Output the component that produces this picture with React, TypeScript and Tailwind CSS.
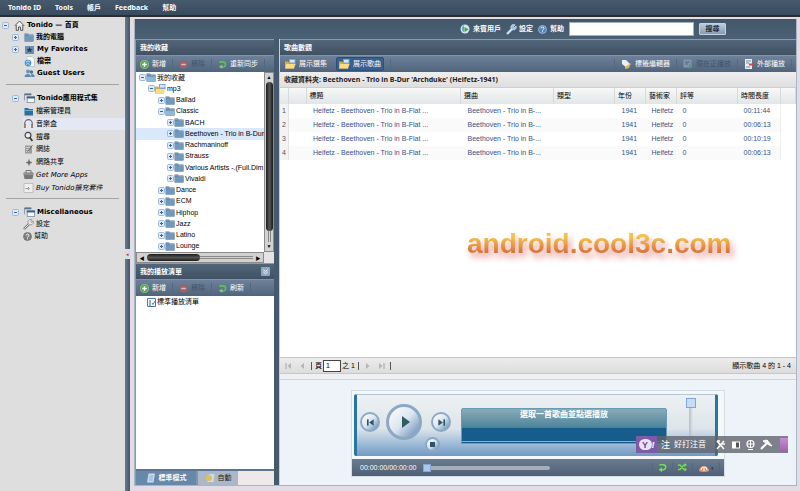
import React from "react";

type NodeProps = { label: string; depth: number; open?: boolean; selected?: boolean; kind?: "folder" | "library" };

const tree: NodeProps[] = [
  { label: "我的收藏", depth: 0, open: true },
  { label: "mp3", depth: 1, open: true, kind: "library" },
  { label: "Ballad", depth: 2 },
  { label: "Classic", depth: 2, open: true },
  { label: "BACH", depth: 3 },
  { label: "Beethoven - Trio in B-Dur", depth: 3, selected: true },
  { label: "Rachmaninoff", depth: 3 },
  { label: "Strauss", depth: 3 },
  { label: "Various Artists -.(Full.Dim", depth: 3 },
  { label: "Vivaldi", depth: 3 },
  { label: "Dance", depth: 2 },
  { label: "ECM", depth: 2 },
  { label: "Hiphop", depth: 2 },
  { label: "Jazz", depth: 2 },
  { label: "Latino", depth: 2 },
  { label: "Lounge", depth: 2 },
];

const indents = ["pl-[3px]", "pl-[12px]", "pl-[22px]", "pl-[31px]"];

const songs = ["00:11:44", "00:06:13", "00:10:19", "00:06:13"];

function Expander({ open }: { open?: boolean }) {
  return (
    <svg viewBox="0 0 7 7" className="h-[7px] w-[7px] shrink-0">
      <rect x=".5" y=".5" width="6" height="6" rx="1" fill="#dfeaf6" stroke="#9db9d5" />
      <path d={open ? "M2 3.5h3" : "M2 3.5h3M3.5 2v3"} stroke="#3c6497" />
    </svg>
  );
}

function Folder({ open }: { open?: boolean }) {
  return (
    <svg viewBox="0 0 10 9" className="h-[9px] w-[10px] shrink-0">
      <path d="M.5.5h3.500l1 1H9.500v7h-9z" fill="#56799a" />
      <path d="M1 2.500h8.500V8.500H1z" fill="#7199bd" />
      {open && <path d="M0 4h10L9 8.500H1z" fill="#8fb8d8" />}
      <path d="M1 1.200h2.800l1 1h4.500" stroke="#9dbbd4" strokeWidth=".7" fill="none" />
    </svg>
  );
}

function YellowFolder() {
  return (
    <svg viewBox="0 0 11 10" className="h-[10px] w-[11px] shrink-0">
      <path d="M0 2.500h3l1 1H9v6H0z" fill="#e2ab33" />
      <rect x="4" y="0" width="6.500" height="6" fill="#7ea6cc" />
      <rect x="5" y="1" width="4.500" height="2.500" fill="#d8eaf7" />
      <path d="M1 5h9.500L9 9.500H.4z" fill="#f9dc85" />
    </svg>
  );
}

function AddIcon() {
  return (
    <svg viewBox="0 0 10 10" className="h-[9px] w-[9px] shrink-0">
      <circle cx="5" cy="5" r="4.500" fill="#55ab47" stroke="#a4d79a" strokeWidth=".7" />
      <path d="M5 2.400v5.200M2.400 5h5.200" stroke="#fff" strokeWidth="1.500" />
    </svg>
  );
}
function RemoveIcon() {
  return (
    <svg viewBox="0 0 10 10" className="h-[9px] w-[9px] shrink-0">
      <circle cx="5" cy="5" r="4.400" fill="#a3606b" />
      <path d="M2.400 5h5.200" stroke="#d9bcc4" strokeWidth="1.600" />
    </svg>
  );
}
function RefreshIcon() {
  return (
    <svg viewBox="0 0 10 10" className="h-[9px] w-[9px] shrink-0">
      <path d="M1.500 2.200h4.200a2.700 2.700 0 0 1 0 5.400H4" stroke="#5cb95e" strokeWidth="2" fill="none" />
      <path d="M4.800 5v5L1 7.600z" fill="#7ad07a" />
    </svg>
  );
}
function WrenchIcon({ light }: { light?: boolean }) {
  return (
    <svg viewBox="0 0 12 12" className="h-[11px] w-[11px] shrink-0">
      <path d="M1.800 10.200 7 5" stroke={light ? "#b9d4f1" : "#777"} strokeWidth="2.600" strokeLinecap="round" />
      <path d="M1.800 10.200 7 5" stroke={light ? "#dcebfb" : "#f1f1f1"} strokeWidth="1" strokeLinecap="round" />
      <path d="M10 1 8.300 2.800l1 1L11 2.200A3 3 0 1 1 10 1z" fill={light ? "#9dbfe6" : "#e6e6e6"} stroke={light ? "#dcebfb" : "#777"} strokeWidth=".7" />
    </svg>
  );
}
function HelpIcon({ light }: { light?: boolean }) {
  return (
    <svg viewBox="0 0 10 10" className="h-[9px] w-[9px] shrink-0">
      <circle cx="5" cy="5" r="4.400" fill={light ? "#4f81bd" : "#808080"} stroke={light ? "#b7d0ee" : "#666"} strokeWidth=".8" />
      <path d="M3.400 3.800c0-2 3.200-2 3.200 0C6.600 5 5 5 5 6.200M5 7v1" stroke="#fff" strokeWidth="1.100" fill="none" />
    </svg>
  );
}

const box = "h-[11px] w-[11px] shrink-0";

function HouseIcon() {
  return (
    <svg viewBox="0 0 11 11" className={box}>
      <path d="M.8 5.800 5.500 1l4.700 4.800M2.200 5v5.300h2.200V7h2.200v3.300h2.200V5" fill="#f4f4f4" stroke="#555" strokeWidth="1" />
    </svg>
  );
}
function StarFolderIcon() {
  return (
    <svg viewBox="0 0 11 11" className={box}>
      <path d="M1 2h9v8H1z" fill="#6c8eb0" />
      <path d="m5.500 3 1 2h2L7 6.400l.6 2.200-2.100-1.300-2.100 1.300L4 6.400 2.500 5h2z" fill="#273f58" />
    </svg>
  );
}
function DocIcon() {
  return (
    <svg viewBox="0 0 11 11" className={box}>
      <path d="M3 .5h5l2.500 2.500v7.500H3z" fill="#f6f9fc" stroke="#a9bccd" strokeWidth=".7" />
      <circle cx="4" cy="7" r="3.300" fill="#4f95c8" />
      <path d="M2 6q2-2 4 0M2 8.500q2-2 3.600 0" stroke="#d8ecf8" strokeWidth=".8" fill="none" />
    </svg>
  );
}
function UsersIcon() {
  return (
    <svg viewBox="0 0 11 11" className={box}>
      <circle cx="4" cy="3.500" r="2" fill="#6c93b8" />
      <circle cx="7.500" cy="4" r="1.700" fill="#4e7396" />
      <path d="M.5 9c0-4 6.500-4 6.500 0zM7.300 9h3.400c0-2.600-1.600-3.300-3.600-3z" fill="#5f88b0" />
    </svg>
  );
}
function WindowsIcon() {
  return (
    <svg viewBox="0 0 12 11" className="h-[10px] w-[11px] shrink-0">
      <path d="M.5 8V1.500H8" stroke="#8b98a5" fill="none" />
      <path d="M.5 1.500H8" stroke="#59718a" strokeWidth="2" />
      <rect x="3.500" y="4" width="8" height="6.500" fill="#f4f7fa" stroke="#8b98a5" />
      <path d="M3 5h9" stroke="#35608c" strokeWidth="2" />
    </svg>
  );
}
function PlainFolderIcon() {
  return (
    <svg viewBox="0 0 11 11" className={box}>
      <path d="M1.500 2h3.500l1 1h4v6.500H1.500z" fill="#2b6f9b" />
      <path d="M1.500 4h8.500v1H1.500z" fill="#6db0d3" />
    </svg>
  );
}
function HeadphonesIcon() {
  return (
    <svg viewBox="0 0 11 11" className={box}>
      <path d="M1.700 8V5.500a3.800 3.800 0 0 1 7.600 0V8" stroke="#666" strokeWidth="1.200" fill="none" />
      <path d="M1.900 6v4M9.100 6v4" stroke="#9b7f70" strokeWidth="2" />
    </svg>
  );
}
function MagnifierIcon() {
  return (
    <svg viewBox="0 0 11 11" className={box}>
      <circle cx="5" cy="4.200" r="2.900" fill="#eee" stroke="#444" strokeWidth="1.200" />
      <path d="m6.800 6.600 2.600 3.400" stroke="#333" strokeWidth="1.700" />
    </svg>
  );
}
function NoteIcon() {
  return (
    <svg viewBox="0 0 11 11" className={box}>
      <path d="M2 1.500h7v8H2z" fill="#9b9b9b" />
      <path d="M3 3.500h4M3 5.500h3M3 7.500h3" stroke="#ddd" strokeWidth=".8" />
      <path d="m4.500 7.500 5-6" stroke="#666" />
    </svg>
  );
}
function ShareIcon() {
  return (
    <svg viewBox="0 0 11 11" className={box}>
      <path d="M6 2.500v6M3 5.500h6" stroke="#888" strokeWidth="1.600" />
      <circle cx="6" cy="5.500" r="1.500" fill="#666" />
    </svg>
  );
}
function BasketIcon() {
  return (
    <svg viewBox="0 0 11 11" className={box}>
      <path d="M3 4V1.500h5V4" stroke="#777" fill="none" />
      <path d="M.5 3.500h10v1.500l-1 5h-8l-1-5z" fill="#777" />
      <path d="M1 5h9" stroke="#bbb" strokeWidth=".8" />
    </svg>
  );
}
function CardIcon() {
  return (
    <svg viewBox="0 0 11 11" className={box}>
      <path d="M1 1.500h9v9H1z" fill="#efefef" stroke="#b0b0b0" strokeWidth=".7" />
      <path d="M2.500 6.500h3M5 5l1.500 1.500L5 8" stroke="#888" strokeWidth=".9" fill="none" />
    </svg>
  );
}

function NavRow({ icon, children, expander, level, bold = true, active, italic }: {
  icon: React.ReactNode; children: React.ReactNode; expander?: "open" | "closed"; level: 0 | 1 | 2; bold?: boolean; active?: boolean; italic?: boolean;
}) {
  const pad = level === 0 ? "pl-[2px]" : level === 1 ? "pl-[12px]" : "pl-[23px]";
  return (
    <li className={`flex min-h-[12px] flex-1 items-center ${pad}`}>
      {level < 2 && <span className="w-[12px]">{expander && <Expander open={expander === "open"} />}</span>}
      <a href="#" className={`flex h-full min-w-0 flex-1 items-center gap-[2px] whitespace-nowrap text-black ${bold ? "font-bold" : ""} ${italic ? "italic" : ""} ${active ? "bg-[#e3e8f4]" : ""}`}>
        {icon}
        {children}
      </a>
    </li>
  );
}

function ToolButton({ icon, children, disabled, pressed }: { icon: React.ReactNode; children: React.ReactNode; disabled?: boolean; pressed?: boolean }) {
  return (
    <button
      disabled={disabled}
      className={`flex h-[14px] items-center gap-[3px] whitespace-nowrap ${disabled ? "text-[#40536a]" : "text-white"} ${pressed ? "rounded-[2px] border border-[#2c4f78] bg-[#35608f] px-[2px]" : "px-[3px]"}`}
    >
      {icon}
      {children}
    </button>
  );
}

const Sep = () => <span className="h-[10px] w-px bg-[#53687f]" />;

const titleBar = "flex h-[16px] shrink-0 items-center border-t border-[#8d9cac] bg-linear-to-b from-[#536679] to-[#3f5163] px-[4px] font-bold text-white";
const toolBar = "flex h-[17px] shrink-0 items-center border-t border-[#8193a6] bg-linear-to-b from-[#6d819a] to-[#50647c]";

function EditTools({ reload }: { reload: string }) {
  return (
    <div className={`${toolBar} gap-[3px] pl-px`}>
      <ToolButton icon={<AddIcon />}>新增</ToolButton>
      <Sep />
      <ToolButton disabled icon={<RemoveIcon />}>移除</ToolButton>
      <Sep />
      <ToolButton icon={<RefreshIcon />}>{reload}</ToolButton>
      <Sep />
    </div>
  );
}

function LeftColumn() {
  return (
    <section className="flex w-[139px] shrink-0 flex-col border-l border-[#8d9cac] bg-white">
      <h2 className={titleBar}>我的收藏</h2>
      <EditTools reload="重新同步" />
      <div className="flex h-[180px] shrink-0">
        <ul className="flex min-w-0 flex-1 flex-col">
          {tree.map((n) => (
            <li key={n.label} className={`flex min-h-0 flex-1 items-center ${indents[n.depth]} ${n.selected ? "bg-[#d9e8fb]" : ""}`}>
              <Expander open={n.open} />
              <a href="#" className="flex items-center gap-px whitespace-nowrap text-black">
                {n.kind === "library" ? <YellowFolder /> : <Folder open={n.open} />}
                {n.label}
              </a>
            </li>
          ))}
        </ul>
        <div className="flex w-[10px] flex-col items-center border border-[#8a8a8a] bg-[#d2d2d2]">
          <span className="h-[9px] text-[5px] leading-[9px]">▲</span>
          <span className="h-[149px] w-[7px] rounded-full bg-linear-to-r from-[#1c1c1c] via-[#555] to-[#1c1c1c]" />
          <span className="w-[3px] flex-1 border-x border-[#888]" />
          <span className="h-[9px] text-[5px] leading-[9px]">▼</span>
        </div>
      </div>
      <div className="flex h-[11px] shrink-0 bg-[#e4e4e4] pr-[10px]">
        <div className="flex flex-1 items-center border border-[#8a8a8a] bg-[#d2d2d2]">
          <span className="w-[10px] text-center text-[5px]">◀</span>
          <span className="h-[7px] w-[53px] rounded-full bg-linear-to-b from-[#1c1c1c] via-[#555] to-[#1c1c1c]" />
          <span className="h-[3px] flex-1 border-y border-[#888]" />
          <span className="w-[10px] text-center text-[5px]">▶</span>
        </div>
      </div>
      <h2 className={`${titleBar} justify-between`}>
        我的播放清單
        <button aria-label="收合" className="flex h-[9px] w-[9px] items-center justify-center rounded-[1px] bg-[#8fa8c4]">
          <svg viewBox="0 0 8 8" className="h-[7px] w-[7px]"><path d="m1.500 2 2.500 2 2.500-2M1.500 4.500l2.500 2 2.500-2" stroke="#fff" fill="none" /></svg>
        </button>
      </h2>
      <EditTools reload="刷新" />
      <ul className="min-h-0 flex-1">
        <li className="flex h-[12px] items-center gap-px pl-[11px]">
          <svg viewBox="0 0 9 9" className="h-[9px] w-[9px]">
            <path d="M.5.5h8v8h-8z" fill="#fff" stroke="#4b77a8" />
            <path d="M2 3h2M2 5h2M2 7h2" stroke="#2e5c96" />
            <path d="m5 5 1 1.500L8 3" stroke="#4a82c4" fill="none" />
          </svg>
          <a href="#" className="text-black">標準播放清單</a>
        </li>
      </ul>
      <div className="flex h-[16px] shrink-0 border-t-2 border-[#5b7592] bg-[#eee9e9]">
        <button className="flex w-[60px] items-center justify-center gap-[3px] bg-[#6788a8] font-bold text-white">
          <svg viewBox="0 0 10 10" className="h-[10px] w-[10px]"><path d="M2.500.5h6.500l-1.500 9H1z" fill="#c6def3" /><path d="M3.500 3h4M3 5h4M2.800 7h4" stroke="#7da1c4" strokeWidth=".8" /></svg>
          標準模式
        </button>
        <button className="flex w-[42px] items-center justify-center gap-[3px] border-l-2 border-[#8196ac] bg-[#abb8c8] text-[#222]">
          <svg viewBox="0 0 10 10" className="h-[10px] w-[10px]"><path d="M4 1h5.500l-1 8H2.500z" fill="#cbdcf0" /><circle cx="4" cy="5" r="3" fill="#e5c151" /></svg>
          自動
        </button>
      </div>
    </section>
  );
}

const headers = ["", "", "標題", "選曲", "類型", "年份", "藝術家", "評等", "時間長度", ""];

function SongTable() {
  return (
    <table className="w-full table-fixed border-collapse text-left">
      <colgroup>
        <col className="w-[8px]" /><col className="w-[18px]" /><col /><col className="w-[93px]" /><col className="w-[61px]" />
        <col className="w-[31px]" /><col className="w-[31px]" /><col className="w-[61px]" /><col className="w-[43px]" /><col className="w-[15px]" />
      </colgroup>
      <thead>
        <tr className="h-[16px] bg-linear-to-b from-[#f7f8f8] to-[#e1e6e6]">
          {headers.map((h, i) => (
            <th key={i} className="whitespace-nowrap border-r border-[#d5dadb] p-0 pl-[3px] font-normal leading-[14px] text-black">{h}</th>
          ))}
        </tr>
      </thead>
      <tbody>
        {songs.map((t, i) => (
          <tr key={i} className={`h-[14px] whitespace-nowrap text-[#35538a] ${i % 2 ? "bg-[#fafafa]" : "bg-white"}`}>
            <td className="border-r border-[#e2e2e2] bg-[#f3f3f3] p-0 pl-[2px] text-[#555]">{i + 1}</td>
            <td className="p-0" />
            <td className="p-0 pl-[7px]">Heifetz - Beethoven - Trio in B-Flat ...</td>
            <td className="p-0 pl-[7px]">Beethoven - Trio in B-...</td>
            <td className="p-0" />
            <td className="p-0 pl-[7px]">1941</td>
            <td className="p-0 pl-[6px]">Heifetz</td>
            <td className="p-0 pl-[6px]">0</td>
            <td className="border-r border-[#eee] p-0 pl-[6px]">{t}</td>
            <td className="bg-white p-0" />
          </tr>
        ))}
      </tbody>
    </table>
  );
}

const roundButton = "flex items-center justify-center rounded-full border-[#8ba9c5] bg-linear-to-br from-white via-[#dbe5ef] to-[#5f89b3]";

function Player() {
  return (
    <div className="flex w-[374px] flex-col border border-[#d2dde6] bg-[#f4f8fb]">
      <div className="flex h-[68px] items-center pl-[2px] pr-[6px]">
        <div className="flex h-[62px] flex-1 rounded-[2px] border-x-[3px] border-t border-x-[#28759f] border-t-[#b4c6d4] bg-linear-to-b from-[#edf1f3] via-[#dde5ea] via-55% to-[#6f9ac5]">
          <div className="grid w-[104px] grid-cols-[24px_44px_30px] items-center pt-[8px]">
            <button aria-label="上一首" className={`${roundButton} ml-[3px] h-[20px] w-[20px] border-2`}>
              <svg viewBox="0 0 10 10" className="h-[9px] w-[9px]"><path d="M2 1.500v7" stroke="#2c5563" strokeWidth="1.800" /><path d="M8.500 1.500v7L3.500 5z" fill="#2c5563" /></svg>
            </button>
            <button aria-label="播放" className={`${roundButton} ml-[5px] h-[36px] w-[36px] border-[3px]`}>
              <svg viewBox="0 0 14 14" className="ml-[4px] h-[14px] w-[14px]"><path d="M3 1v12l8-6z" fill="#315b65" /></svg>
            </button>
            <button aria-label="下一首" className={`${roundButton} ml-[6px] h-[20px] w-[20px] border-2`}>
              <svg viewBox="0 0 10 10" className="h-[9px] w-[9px]"><path d="M8 1.500v7" stroke="#2c5563" strokeWidth="1.800" /><path d="M1.500 1.500v7L6.500 5z" fill="#2c5563" /></svg>
            </button>
            <button aria-label="停止" className={`${roundButton} col-start-3 -mt-[5px] mb-[3px] h-[15px] w-[15px] border-2`}>
              <span className="h-[5px] w-[5px] bg-[#2c5563]" />
            </button>
          </div>
          <div className="mt-[13px] flex h-[36px] flex-1 flex-col rounded-t-[2px] border border-[#6b9bb2] bg-[#175d8c] text-center text-[8px] font-bold text-white">
            <p className="h-[19px] shrink-0 bg-linear-to-b from-[#8aabb6] to-[#4a839a] leading-[11px]">選取一首歌曲並點選播放</p>
            <span className="mt-[13px] h-px bg-[#86adc8]" />
          </div>
          <div className="flex w-[48px] justify-center pt-[3px]">
            <input
              type="range" aria-label="音量" defaultValue={100}
              className="h-[38px] w-[10px] appearance-none bg-linear-to-r from-transparent from-30% via-[#b6c0c8] via-30% to-transparent to-70% [direction:rtl] [writing-mode:vertical-lr] [&::-webkit-slider-thumb]:h-[10px] [&::-webkit-slider-thumb]:w-[10px] [&::-webkit-slider-thumb]:appearance-none [&::-webkit-slider-thumb]:border [&::-webkit-slider-thumb]:border-[#7fa6d6] [&::-webkit-slider-thumb]:bg-[#c5dcf6]"
            />
          </div>
        </div>
      </div>
      <div className="flex h-[17px] items-center bg-linear-to-b from-[#6b7b8f] to-[#4f6076] pl-[8px] pr-[4px] text-white">
        <span className="w-[58px] whitespace-nowrap">00:00:00/00:00:00</span>
        <input
          type="range" aria-label="進度" defaultValue={0}
          className="ml-[5px] h-[9px] w-[127px] appearance-none bg-transparent [&::-webkit-slider-runnable-track]:h-[4px] [&::-webkit-slider-runnable-track]:rounded-full [&::-webkit-slider-runnable-track]:bg-[#a4aeba] [&::-webkit-slider-thumb]:mt-[-2px] [&::-webkit-slider-thumb]:h-[8px] [&::-webkit-slider-thumb]:w-[8px] [&::-webkit-slider-thumb]:appearance-none [&::-webkit-slider-thumb]:border [&::-webkit-slider-thumb]:border-[#86a7cf] [&::-webkit-slider-thumb]:bg-[#abc8ec]"
        />
        <div className="ml-auto flex items-center gap-[5px]">
          <Sep />
          <button aria-label="重複播放"><svg viewBox="0 0 9 9" className="h-[9px] w-[9px]"><path d="M1.500 1.700h3.700a2.500 2.500 0 0 1 0 5H3" stroke="#6ee04f" strokeWidth="1.500" fill="none" /><path d="M4 4.200V9L.5 6.700z" fill="#6ee04f" /></svg></button>
          <Sep />
          <button aria-label="隨機播放"><svg viewBox="0 0 9 9" className="h-[9px] w-[9px]"><path d="M0 2h2l4 4.500h2M0 6.500h2L6 2h2" stroke="#6ee04f" strokeWidth="1.400" fill="none" /><path d="M6.500 0 9 2 6.500 4zM6.500 4.500 9 6.500l-2.500 2z" fill="#6ee04f" /></svg></button>
          <Sep />
          <button aria-label="品質" className="flex items-center gap-px text-[5px] text-[#23374e]">
            <svg viewBox="0 0 12 10" className="h-[10px] w-[12px]"><path d="M1 8a5 5 0 1 1 10 0L8 9H4z" fill="#dd9674" /><path d="M3 7a3 3 0 0 1 6 0M6 8V5" stroke="#fff" strokeWidth=".9" fill="none" /></svg>▾
          </button>
          <Sep />
        </div>
      </div>
    </div>
  );
}

function PageIcon({ flip, edge }: { flip?: boolean; edge?: boolean }) {
  return (
    <svg viewBox="0 0 8 8" className={`h-[8px] w-[8px] ${flip ? "rotate-180" : ""}`}>
      <path d="M6 1v6L2.500 4z" fill="#b5b5b5" />
      {edge && <path d="M1 1v6" stroke="#a5a5a5" />}
    </svg>
  );
}

const Bar = () => <span className="h-[8px] w-px bg-[#555]" />;

function RightColumn() {
  return (
    <section className="flex min-w-0 flex-1 flex-col border-l border-[#c5d0da] bg-white">
      <h2 className={titleBar}>歌曲數觀</h2>
      <div className={`${toolBar} gap-[6px] pl-[2px]`}>
        <ToolButton icon={<YellowFolder />}>展示選集</ToolButton>
        <ToolButton pressed icon={<YellowFolder />}>展示歌曲</ToolButton>
        <Sep />
        <div className="ml-auto flex items-center gap-[3px] pr-[4px]">
          <Sep />
          <ToolButton icon={<svg viewBox="0 0 11 11" className={box}><path d="M1 1h4l4.500 4.500L6 9 1 5z" fill="#e8f0f5" /><path d="m4 8 6-4-2 5-4 1z" fill="#e8b04e" /></svg>}>標籤編輯器</ToolButton>
          <Sep />
          <ToolButton disabled icon={<svg viewBox="0 0 10 10" className="h-[10px] w-[10px]"><path d="M.5.5h8v8h-8z" fill="#8098ad" /><path d="M2 3h5M2 5h3" stroke="#4f677f" /><path d="M6 5v5l4-2.500z" fill="#5a9377" /></svg>}>現在正播放</ToolButton>
          <Sep />
          <ToolButton icon={<svg viewBox="0 0 10 10" className="h-[10px] w-[10px]"><path d="M1 0h7v10H1z" fill="#e6edf3" /><path d="M2 2h5M2 4h3M2 8h4" stroke="#7690a8" /><path d="M5 4.500h3V3l2 2.700L8 8V6.500H5z" fill="#d64740" /></svg>}>外部播放</ToolButton>
          <Sep />
        </div>
      </div>
      <p className="flex h-[16px] shrink-0 items-center border-b border-[#cfcfcf] bg-linear-to-b from-[#efeeee] to-[#dfdfdf] pl-[4px] font-['Noto_Sans','Noto_Sans_CJK_TC',sans-serif] font-bold text-[#222]">
        收藏資料夾: Beethoven - Trio in B-Dur 'Archduke' (Heifetz-1941)
      </p>
      <div className="min-h-0 flex-1"><SongTable /></div>
      <footer className="flex h-[17px] shrink-0 items-center border-y border-[#c2c8cd] bg-linear-to-b from-[#ececec] to-[#dcdcdc] px-[5px] text-black">
        <div className="flex items-center gap-[5px]">
          <button aria-label="第一頁"><PageIcon edge /></button>
          <button aria-label="上一頁"><PageIcon /></button>
          <Bar />
        </div>
        <label htmlFor="page" className="ml-[3px]">頁</label>
        <input id="page" defaultValue="1" className="ml-px h-[12px] w-[18px] border border-[#444] bg-white px-[2px] leading-[10px]" />
        <span className="ml-px">之 1</span>
        <div className="ml-[3px] flex items-center gap-[5px]">
          <Bar />
          <button aria-label="下一頁"><PageIcon flip /></button>
          <button aria-label="最後一頁"><PageIcon flip edge /></button>
          <Bar />
        </div>
        <span className="ml-auto">顯示歌曲 4 的 1 - 4</span>
      </footer>
      <div className="h-[6px] shrink-0 border-b border-[#cbd5dd] bg-[#eef1f4]" />
      <div className="flex h-[105px] shrink-0 items-start justify-center bg-[#edf3f8] pt-[10px]"><Player /></div>
    </section>
  );
}

function ImeBar() {
  return (
    <div className="absolute right-[12px] bottom-[38px] flex h-[17px] items-center bg-[#60646d]/80 text-[9px] text-white">
      <span className="flex h-full w-[21px] items-center justify-center bg-[#7e5ba6]">
        <span className="flex h-[11px] w-[13px] items-center justify-center rounded-full bg-[#e9e2f2] text-[9px] font-black text-[#6b4693]">Y</span>
        <span className="font-bold italic">!</span>
      </span>
      <span className="w-[17px] pl-[4px]">注</span>
      <span className="w-[42px] text-[8px]">好打注音</span>
      <svg viewBox="0 0 60 12" className="h-[12px] w-[60px]">
        <path d="m1 2 7 8M8 2l-7 8M1 2h3M6 5h3" stroke="#fff" strokeWidth="1.500" />
        <path d="M16 2.500h8v7h-8z" fill="#fff" /><path d="M20 3.500h3v5h-3z" fill="#555" />
        <circle cx="34.500" cy="5" r="3.500" fill="none" stroke="#fff" strokeWidth="1.200" /><path d="M31 5h7M34.500 2v7M32 10.500h5" stroke="#fff" />
        <path d="m45 10 6-6" stroke="#fff" strokeWidth="2" /><path d="m47 2 4-1 5 6-3-1z" fill="#fff" stroke="#fff" />
      </svg>
      <span className="ml-[4px] h-[14px] w-[8px] bg-linear-to-b from-[#c98fd0] to-[#9d5fae]" />
    </div>
  );
}

export default function App() {
  return (
    <div className="relative flex h-screen flex-col overflow-hidden bg-[#e2dde4] font-['Liberation_Sans','Noto_Sans_CJK_TC',sans-serif] text-[7px] leading-[10px]">
      <nav className="flex h-[17px] shrink-0 items-center gap-[14px] border-b-2 border-[#2b2d30] bg-linear-to-b from-[#47596c] to-[#384a5d] pl-[8px] font-['Noto_Sans','Noto_Sans_CJK_TC',sans-serif] font-bold text-white">
        <a href="#">Tonido ID</a><a href="#">Tools</a><a href="#">帳戶</a><a href="#">Feedback</a><a href="#">幫助</a>
      </nav>
      <div className="flex min-h-0 flex-1">
        <aside className="w-[125px] shrink-0 bg-[#dedede] pt-[2px] font-['DejaVu_Sans','Noto_Sans_CJK_TC',sans-serif]">
          <ul className="flex h-[60px] flex-col">
            <NavRow level={0} expander="open" icon={<HouseIcon />}>Tonido — 首頁</NavRow>
            <NavRow level={1} expander="closed" icon={<Folder />}>我的電腦</NavRow>
            <NavRow level={1} expander="closed" icon={<StarFolderIcon />}>My Favorites</NavRow>
            <NavRow level={1} icon={<DocIcon />}>檔案</NavRow>
            <NavRow level={1} icon={<UsersIcon />}>Guest Users</NavRow>
          </ul>
          <hr className="mx-[6px] mt-[5px] mb-[7px] border-[#a3a3a3]" />
          <ul className="flex h-[102px] flex-col">
            <NavRow level={1} expander="open" icon={<WindowsIcon />}>Tonido應用程式集</NavRow>
            <NavRow level={2} bold={false} icon={<PlainFolderIcon />}>檔案管理員</NavRow>
            <NavRow level={2} bold={false} active icon={<HeadphonesIcon />}>音樂盒</NavRow>
            <NavRow level={2} bold={false} icon={<MagnifierIcon />}>搜尋</NavRow>
            <NavRow level={2} bold={false} icon={<NoteIcon />}>網誌</NavRow>
            <NavRow level={2} bold={false} icon={<ShareIcon />}>網路共享</NavRow>
            <NavRow level={2} bold={false} italic icon={<BasketIcon />}>Get More Apps</NavRow>
            <NavRow level={2} bold={false} italic icon={<CardIcon />}>Buy Tonido擴充套件</NavRow>
          </ul>
          <hr className="mx-[6px] mt-[4px] mb-[7px] border-[#a3a3a3]" />
          <ul className="flex h-[36px] flex-col">
            <NavRow level={1} expander="open" icon={<WindowsIcon />}>Miscellaneous</NavRow>
            <NavRow level={2} bold={false} icon={<WrenchIcon />}>設定</NavRow>
            <NavRow level={2} bold={false} icon={<HelpIcon />}>幫助</NavRow>
          </ul>
        </aside>
        <div className="flex w-[5px] shrink-0 items-center bg-linear-to-r from-[#6a7b8c] to-[#43576b]">
          <span className="h-[10px] w-full bg-[#d8dde2] text-center text-[5px] leading-[10px] text-[#a33]">◂</span>
        </div>
        <main className="ml-[4px] mr-[3px] mb-[5px] mt-[2px] flex min-w-0 flex-1 flex-col border border-t-0 border-[#a8b6c3] bg-[#46596d]">
          <header className="flex h-[20px] shrink-0 items-center bg-linear-to-b from-[#43576b] to-[#4c6075] pr-[70px]">
            <div className="ml-auto flex items-center gap-[5px] font-bold text-white">
              <a href="#" className="flex items-center gap-[3px]"><svg viewBox="0 0 10 10" className="h-[10px] w-[10px]"><circle cx="5" cy="5" r="4.500" fill="#cfe3ee" /><path d="M4 1a4 4 0 0 0 0 7z" fill="#5ba4d6" /><path d="M4.500 3v5l4-2.500z" fill="#48a145" /></svg>來賓用戶</a>
              <a href="#" className="flex items-center gap-[2px]"><WrenchIcon light />設定</a>
              <a href="#" className="flex items-center gap-[3px]"><HelpIcon light />幫助</a>
              <input aria-label="搜尋" className="h-[14px] w-[125px] border border-[#9fb0c0] bg-white text-black" />
              <button className="h-[12px] w-[27px] rounded-[1px] border border-[#c4d2df] bg-linear-to-b from-[#bccbda] to-[#869cb2] leading-[10px] text-[#1d2a38]">搜尋</button>
            </div>
          </header>
          <div className="flex min-h-0 flex-1 gap-[5px]">
            <LeftColumn />
            <RightColumn />
          </div>
        </main>
      </div>
      <p className="pointer-events-none absolute top-[227px] left-[467px] bg-linear-to-b from-[#f5c04b] from-30% to-[#d56a37] to-80% bg-clip-text text-[28px] leading-[34px] font-bold text-transparent drop-shadow-[3px_5px_3px_rgba(205,60,50,0.5)]">
        android.cool3c.com
      </p>
      <ImeBar />
    </div>
  );
}
